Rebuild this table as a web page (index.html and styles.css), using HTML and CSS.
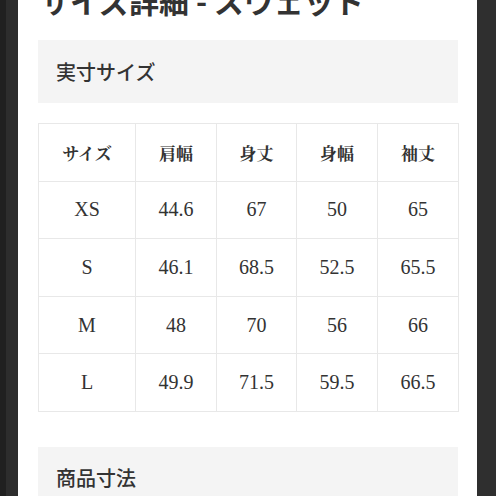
FILE: index.html
```html
<!DOCTYPE html>
<html lang="ja">
<head>
<meta charset="utf-8">
<title>サイズ詳細 - スウェット</title>
<link rel="stylesheet" href="styles.css">
</head>
<body>
<div class="frame">
  <div class="edge edge-left"></div>
  <main class="page">
    <h1 class="title">サイズ詳細 - スウェット</h1>
    <section class="panel panel-first">
      <h2 class="panel-title">実寸サイズ</h2>
    </section>
    <table class="sizes">
      <colgroup>
        <col class="c1"><col class="c2"><col class="c3"><col class="c4"><col class="c5">
      </colgroup>
      <thead>
        <tr><th>サイズ</th><th>肩幅</th><th>身丈</th><th>身幅</th><th>袖丈</th></tr>
      </thead>
      <tbody>
        <tr><td>XS</td><td>44.6</td><td>67</td><td>50</td><td>65</td></tr>
        <tr><td>S</td><td>46.1</td><td>68.5</td><td>52.5</td><td>65.5</td></tr>
        <tr><td>M</td><td>48</td><td>70</td><td>56</td><td>66</td></tr>
        <tr><td>L</td><td>49.9</td><td>71.5</td><td>59.5</td><td>66.5</td></tr>
      </tbody>
    </table>
    <section class="panel panel-second">
      <h2 class="panel-title">商品寸法</h2>
    </section>
  </main>
  <div class="edge edge-right"></div>
</div>
</body>
</html>
```

FILE: styles.css
```css
html, body {
  margin: 0;
  padding: 0;
  height: 100%;
  overflow: hidden;
  background: #2d2d2d;
}

.frame {
  display: flex;
  height: 496px;
}

.edge {
  flex: none;
}

.edge-left {
  width: 18px;
  background: linear-gradient(to right, #202020 0, #202020 6px, #2d2d2d 6px, #2d2d2d 100%);
}

.edge-right {
  width: 19px;
  background: #2f2f2f;
}

.page {
  flex: 1;
  background: #ffffff;
  padding: 0 19px 0 20px;
  overflow: hidden;
  font-family: "Noto Sans CJK JP", "Noto Sans", sans-serif;
  color: #333333;
}

.title {
  margin: -14px 0 0 2px;
  height: 26px;
  font-size: 30px;
  line-height: 29px;
  font-weight: 700;
  color: #333333;
  white-space: nowrap;
}

.panel {
  height: 63px;
  background: #f4f4f4;
  display: flex;
  align-items: center;
  padding-left: 18px;
}

.panel-first {
  margin-top: 28px;
}

.panel-title {
  margin: 0;
  font-size: 20px;
  font-weight: 500;
  color: #333333;
  line-height: 1;
}

.panel-second {
  margin-top: 35px;
}

.sizes {
  margin-top: 20px;
  width: 420px;
  border-collapse: collapse;
  table-layout: fixed;
  font-family: "Liberation Serif", "Noto Serif CJK JP", "Noto Sans CJK JP", serif;
  color: #333333;
}

.c1 { width: 97px; }
.c2 { width: 81px; }
.c3 { width: 80px; }
.c4 { width: 81px; }
.c5 { width: 81px; }

.sizes th,
.sizes td {
  border: 1px solid #e8e8e8;
  height: 56.6px;
  padding: 0;
  text-align: center;
  vertical-align: middle;
}

.sizes th {
  font-size: 17px;
  font-weight: 700;
}

.sizes td {
  font-size: 20px;
  font-weight: 400;
}
```
